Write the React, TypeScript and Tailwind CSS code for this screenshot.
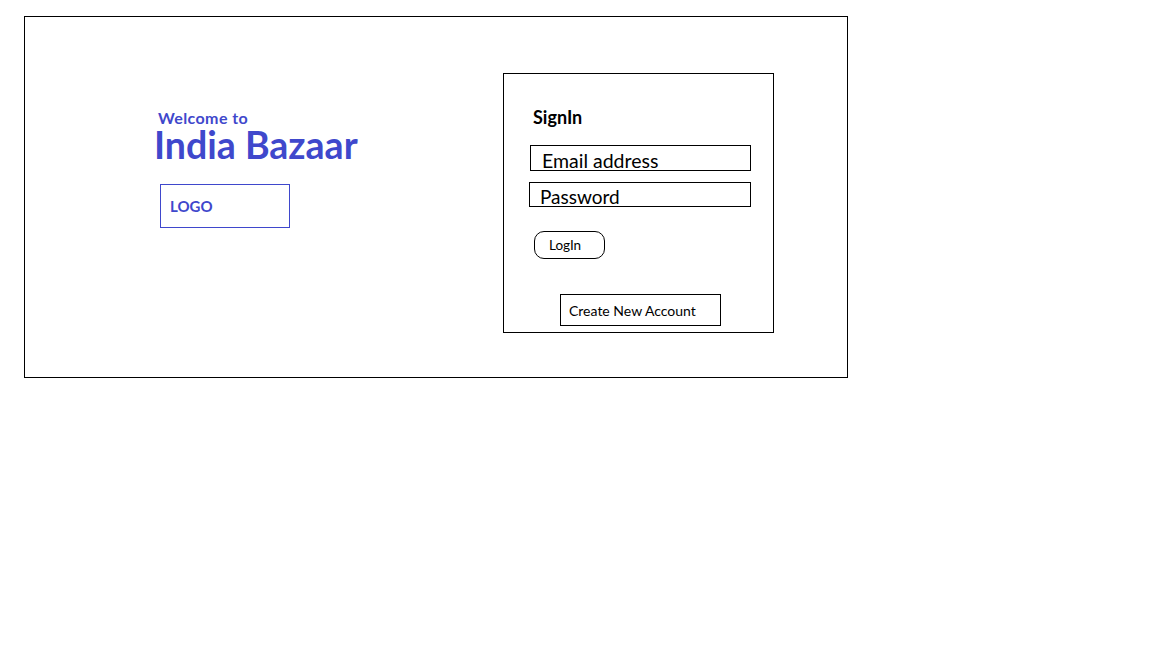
export default function App() {
  return (
    <div className="min-h-screen w-full bg-white pl-[24px] pt-[16px] font-['Lato','Open_Sans',sans-serif]">
      <div className="flex h-[362px] w-[824px] border border-black">
        <div className="w-[478px] pl-[130px] pt-[92px]">
          <div className="ml-[3px] text-[16px] font-bold leading-[18px] tracking-[0.4px] text-[#3f48cc]">Welcome to</div>
          <div className="-ml-[1px] text-[37.5px] font-bold leading-[36px] text-[#3f48cc]">India Bazaar</div>
          <div className="ml-[5px] mt-[21px] flex h-[44px] w-[130px] items-center border border-[#3f48cc] pl-[9px] text-[15px] font-bold text-[#3f48cc]">
            LOGO
          </div>
        </div>
        <div className="mt-[56px] h-[260px] w-[271px] border border-black pl-[25px] pt-[32px]">
          <div className="ml-[4px] text-[18px] font-bold leading-[22px] text-black">SignIn</div>
          <div className="ml-[1px] mt-[17px] flex h-[26px] w-[221px] items-end overflow-hidden border border-black pl-[11px] text-[19.5px] leading-[19px] text-black">
            Email address
          </div>
          <div className="mt-[11px] flex h-[25px] w-[222px] items-end overflow-hidden border border-black pl-[10px] text-[19px] leading-[19px] text-black">
            Password
          </div>
          <div className="ml-[5px] mt-[24px] flex h-[28px] w-[71px] items-center rounded-[10px] border border-black pl-[14px] text-[13.5px] text-black">
            LogIn
          </div>
          <div className="ml-[31px] mt-[35px] flex h-[32px] w-[161px] items-center border border-black pl-[8px] text-[14px] text-black">
            Create New Account
          </div>
        </div>
      </div>
    </div>
  );
}
